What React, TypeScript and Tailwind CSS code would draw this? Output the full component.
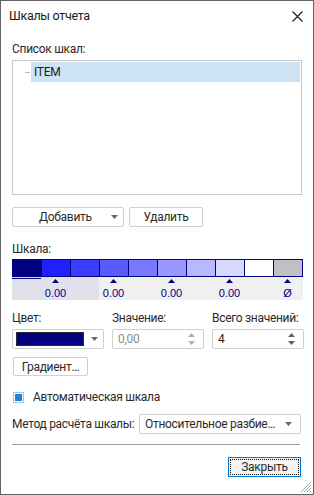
import React from 'react';

const cells = ['#000080', '#2020ff', '#3c3cff', '#5a5aff', '#7878ff', '#9898ff', '#b8b8ff', '#d8d8ff', '#ffffff', '#c0c0c4'];
const marks: Record<number, string> = { 1: '0.00', 3: '0.00', 5: '0.00', 7: '0.00', 9: 'Ø' };

const Arrow = () => (
  <svg width="7" height="4" viewBox="0 0 7 4" className="shrink-0">
    <path d="M0 0h7L3.5 4z" fill="#6a6a6a" />
  </svg>
);

const Spin = ({ dark }: { dark?: boolean }) => (
  <svg width="7" height="12" viewBox="0 0 7 12" className="shrink-0">
    <path d="M3.5 0L7 4H0z" fill={dark ? '#606060' : '#b0b0b0'} />
    <path d="M0 8h7l-3.5 4z" fill={dark ? '#606060' : '#b0b0b0'} />
  </svg>
);

export default function App() {
  return (
    <div className="relative w-[314px] h-[495px] bg-white border border-[#646464] text-[12px] text-[#2b2b2b] font-['Roboto',sans-serif] leading-4 tracking-[-0.3px] whitespace-nowrap overflow-hidden">
      {/* title */}
      <div className="h-[30px] flex items-center justify-between pl-2 pr-[10px]">
        <span className="text-[#1a1a1a] text-[12.5px]">Шкалы отчета</span>
        <svg width="11" height="11" viewBox="0 0 11 11">
          <path d="M0.5 0.5l10 10M10.5 0.5l-10 10" stroke="#1a1a1a" strokeWidth="1.1" />
        </svg>
      </div>

      <div className="px-[11px]">
        <div className="mt-[10px]">Список шкал:</div>

        {/* list */}
        <div className="mt-[3px] h-[135px] border border-[#c8c8c8] pt-px pr-px">
          <div className="flex items-center h-5">
            <div className="w-[5px] h-px bg-[#c0c0c0] ml-3" />
            <div className="flex-1 h-5 bg-[#cde3f4] flex items-center pl-[3px] ml-px text-[#1a1a1a]">ITEM</div>
          </div>
        </div>

        {/* buttons */}
        <div className="mt-3 flex gap-[5px]">
          <div className="w-[112px] h-5 border border-[#d0d0d0] rounded-[2px] flex items-center pl-[26px] pr-[5px] justify-between">
            <span>Добавить</span>
            <Arrow />
          </div>
          <div className="w-[74px] h-5 border border-[#d0d0d0] rounded-[2px] flex items-center justify-center">Удалить</div>
        </div>

        <div className="mt-[14px]">Шкала:</div>

        {/* scale bar */}
        <div className="mt-[2px] w-[291px] h-[18px] border border-[#000080] flex">
          {cells.map((c, i) => (
            <div key={i} className={`h-full ${i > 0 ? 'border-l border-[#000080]' : ''}`} style={{ background: c, width: i === 0 ? 28 : 29 }} />
          ))}
        </div>
        <div className="w-[291px] h-[23px] bg-[#f0f0f0] flex relative tracking-normal">
          <div className="absolute left-0 top-0 w-[87px] h-full bg-[#e1e1eb]" />
          <div className="absolute left-0 top-px w-[29px] h-px bg-[#000080]" />
          {cells.map((_, i) => (
            <div key={i} className="relative h-full flex flex-col items-center" style={{ width: 29 }}>
              {marks[i] && (
                <>
                  <svg width="7" height="4" viewBox="0 0 7 4" className="mt-[2px]">
                    <path d="M3.5 0L7 4H0z" fill="#000080" />
                  </svg>
                  <span className="mt-[4px] font-['Liberation_Sans',sans-serif] text-[11px] leading-3 text-[#000080]">{marks[i]}</span>
                </>
              )}
            </div>
          ))}
        </div>

        {/* value row */}
        <div className="mt-[10px] grid grid-cols-[92px_92px_92px] gap-x-[8px]">
          <div>Цвет:</div>
          <div>Значение:</div>
          <div>Всего значений:</div>
          <div className="mt-[3px] h-5 border border-[#d0d0d0] rounded-[2px] flex items-center pl-[3px] pr-[5px] justify-between">
            <div className="w-[68px] h-[14px] bg-[#000080] border border-[#2a2a2a]" />
            <Arrow />
          </div>
          <div className="mt-[3px] h-5 border border-[#d0d0d0] rounded-[2px] flex items-center pl-[5px] pr-[8px] justify-between text-[#8a8a8a]">
            <span>0,00</span>
            <Spin />
          </div>
          <div className="mt-[3px] h-5 border border-[#d0d0d0] rounded-[2px] flex items-center pl-[5px] pr-[8px] justify-between">
            <span>4</span>
            <Spin dark />
          </div>
        </div>

        <div className="mt-2 ml-px w-[75px] h-[19px] border border-[#d0d0d0] rounded-[2px] flex items-center justify-center">Градиент…</div>

        {/* checkbox */}
        <div className="mt-[13px] flex items-center gap-[9px] ml-px">
          <div className="w-[11px] h-[11px] border border-[#9cc6ec] p-px">
            <div className="w-full h-full bg-[#1f80d4]" />
          </div>
          <span>Автоматическая шкала</span>
        </div>

        {/* method */}
        <div className="mt-[9px] flex items-center justify-between pr-px">
          <span>Метод расчёта шкалы:</span>
          <div className="w-[162px] h-5 border border-[#d0d0d0] rounded-[2px] flex items-center pl-[5px] pr-[8px] justify-between">
            <span>Относительное разбие…</span>
            <Arrow />
          </div>
        </div>

        <div className="mt-[10px] w-[288px] h-px bg-[#a0a0a0]" />

        <div className="mt-3 flex justify-end pr-px">
          <div className="w-[73px] h-5 border border-[#0078d7] bg-[#f3f3f3] p-px">
            <div className="w-full h-full border border-dotted border-[#111] flex items-center justify-center">Закрыть</div>
          </div>
        </div>
      </div>

      <svg width="12" height="12" viewBox="0 0 12 12" className="absolute right-px bottom-px">
        <path d="M11 1L1 11M11 4L4 11M11 7L7 11M11 10L10 11" stroke="#a8a8a8" strokeWidth="1" />
      </svg>
    </div>
  );
}
